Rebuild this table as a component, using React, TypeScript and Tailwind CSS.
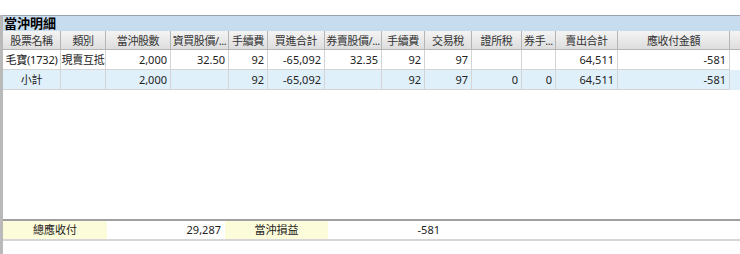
const cols = [
  { w: 58, h: '股票名稱' },
  { w: 45, h: '類別' },
  { w: 65, h: '當沖股數' },
  { w: 58, h: '資買股價/...' },
  { w: 39, h: '手續費' },
  { w: 57, h: '買進合計' },
  { w: 57, h: '券賣股價/...' },
  { w: 43, h: '手續費' },
  { w: 47, h: '交易稅' },
  { w: 50, h: '證所稅' },
  { w: 34, h: '券手...' },
  { w: 62, h: '賣出合計' },
  { w: 112, h: '應收付金額' },
];

const rows = [
  { bg: 'bg-white', cells: ['毛寶(1732)', '現賣互抵', '2,000', '32.50', '92', '-65,092', '32.35', '92', '97', '', '', '64,511', '-581'] },
  { bg: 'bg-[#e0f0fa]', cells: ['小計', '', '2,000', '', '92', '-65,092', '', '92', '97', '0', '0', '64,511', '-581'] },
];

function Row({ bg, cells }: { bg: string; cells: string[] }) {
  return (
    <div className={`flex h-[20px] ${bg}`}>
      {cells.map((c, i) => (
        <div
          key={i}
          style={{ width: cols[i].w }}
          className={`shrink-0 h-full border-r border-b border-[#d4d4d4] flex items-center leading-none whitespace-nowrap overflow-hidden ${
            i < 2 ? 'justify-center tracking-[-0.2px]' : 'justify-end px-[3px]'
          }`}
        >
          {c}
        </div>
      ))}
      <div className="flex-1 h-full" />
    </div>
  );
}

export default function App() {
  return (
    <div className="w-[740px] h-[254px] bg-white overflow-hidden text-[11px] text-[#222] font-['Noto_Sans','Noto_Sans_CJK_TC',sans-serif]">
      <div className="h-[15px]" />
      <div className="border-l-[3px] border-[#b9b9b9] h-[239px] flex flex-col">
        <div className="h-[16px] border-t border-[#9aa3ad] bg-[#c8dcf0] flex items-center pl-[1px] text-[13px] font-bold text-black leading-none">
          當沖明細
        </div>
        <div className="flex h-[19px] bg-gradient-to-b from-[#f4f4f4] to-[#dcdcdc] text-[#333]">
          {cols.map((c, i) => (
            <div
              key={i}
              style={{ width: c.w }}
              className="shrink-0 h-full border-r border-b border-[#b5b5b5] flex items-center justify-center leading-none whitespace-nowrap overflow-hidden tracking-[-0.4px]"
            >
              {c.h}
            </div>
          ))}
          <div className="flex-1 h-full border-b border-[#b5b5b5]" />
        </div>
        {rows.map((r, i) => (
          <Row key={i} bg={r.bg} cells={r.cells} />
        ))}
        <div className="flex-1" />
        <div className="h-[22px] border-t-2 border-b-2 border-t-[#a0a0a0] border-b-[#d6d6d6] flex">
          <div className="w-[104px] bg-[#fdfcda] flex items-center justify-center">總應收付</div>
          <div className="w-[118px] flex items-center justify-end pr-[4px]">29,287</div>
          <div className="w-[103px] bg-[#fdfcda] flex items-center justify-center">當沖損益</div>
          <div className="w-[116px] flex items-center justify-end pr-[4px]">-581</div>
        </div>
        <div className="h-[13px]" />
      </div>
    </div>
  );
}
